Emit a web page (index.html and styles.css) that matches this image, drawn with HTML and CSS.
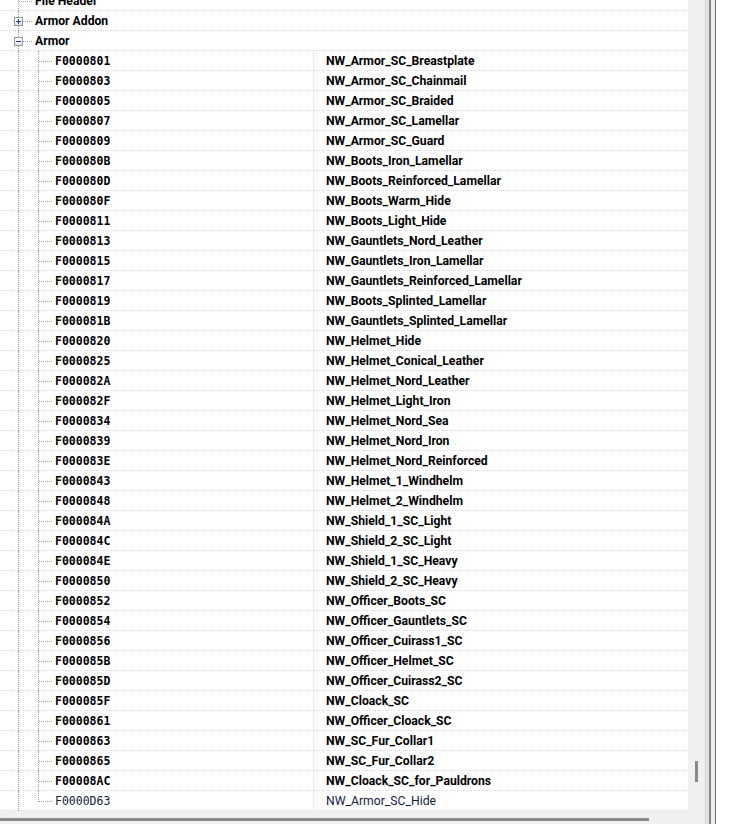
FILE: index.html
```html
<!DOCTYPE html>
<html lang="en">
<head>
  <meta charset="UTF-8" />
  <title>Records</title>
  <link rel="stylesheet" href="styles.css">
</head>
<body>
  <div class="window">
    <div class="tree-panel">
      <div class="tree">
        <div class="rows">
          <!-- group nodes -->
          <div class="row group">
            <span class="guide"></span>
            <span class="label">File Header</span>
          </div>
          <div class="row group">
            <span class="guide"><i class="toggle plus"></i></span>
            <span class="label">Armor Addon</span>
          </div>
          <div class="row group">
            <span class="guide"><i class="toggle"></i></span>
            <span class="label">Armor</span>
          </div>

          <!-- armor records -->
          <div class="row"><div class="col-id"><span class="guide"></span><span class="guide branch"></span><span class="id">F0000801</span></div><div class="col-name">NW_Armor_SC_Breastplate</div></div>
          <div class="row"><div class="col-id"><span class="guide"></span><span class="guide branch"></span><span class="id">F0000803</span></div><div class="col-name">NW_Armor_SC_Chainmail</div></div>
          <div class="row"><div class="col-id"><span class="guide"></span><span class="guide branch"></span><span class="id">F0000805</span></div><div class="col-name">NW_Armor_SC_Braided</div></div>
          <div class="row"><div class="col-id"><span class="guide"></span><span class="guide branch"></span><span class="id">F0000807</span></div><div class="col-name">NW_Armor_SC_Lamellar</div></div>
          <div class="row"><div class="col-id"><span class="guide"></span><span class="guide branch"></span><span class="id">F0000809</span></div><div class="col-name">NW_Armor_SC_Guard</div></div>
          <div class="row"><div class="col-id"><span class="guide"></span><span class="guide branch"></span><span class="id">F000080B</span></div><div class="col-name">NW_Boots_Iron_Lamellar</div></div>
          <div class="row"><div class="col-id"><span class="guide"></span><span class="guide branch"></span><span class="id">F000080D</span></div><div class="col-name">NW_Boots_Reinforced_Lamellar</div></div>
          <div class="row"><div class="col-id"><span class="guide"></span><span class="guide branch"></span><span class="id">F000080F</span></div><div class="col-name">NW_Boots_Warm_Hide</div></div>
          <div class="row"><div class="col-id"><span class="guide"></span><span class="guide branch"></span><span class="id">F0000811</span></div><div class="col-name">NW_Boots_Light_Hide</div></div>
          <div class="row"><div class="col-id"><span class="guide"></span><span class="guide branch"></span><span class="id">F0000813</span></div><div class="col-name">NW_Gauntlets_Nord_Leather</div></div>
          <div class="row"><div class="col-id"><span class="guide"></span><span class="guide branch"></span><span class="id">F0000815</span></div><div class="col-name">NW_Gauntlets_Iron_Lamellar</div></div>
          <div class="row"><div class="col-id"><span class="guide"></span><span class="guide branch"></span><span class="id">F0000817</span></div><div class="col-name">NW_Gauntlets_Reinforced_Lamellar</div></div>
          <div class="row"><div class="col-id"><span class="guide"></span><span class="guide branch"></span><span class="id">F0000819</span></div><div class="col-name">NW_Boots_Splinted_Lamellar</div></div>
          <div class="row"><div class="col-id"><span class="guide"></span><span class="guide branch"></span><span class="id">F000081B</span></div><div class="col-name">NW_Gauntlets_Splinted_Lamellar</div></div>
          <div class="row"><div class="col-id"><span class="guide"></span><span class="guide branch"></span><span class="id">F0000820</span></div><div class="col-name">NW_Helmet_Hide</div></div>
          <div class="row"><div class="col-id"><span class="guide"></span><span class="guide branch"></span><span class="id">F0000825</span></div><div class="col-name">NW_Helmet_Conical_Leather</div></div>
          <div class="row"><div class="col-id"><span class="guide"></span><span class="guide branch"></span><span class="id">F000082A</span></div><div class="col-name">NW_Helmet_Nord_Leather</div></div>
          <div class="row"><div class="col-id"><span class="guide"></span><span class="guide branch"></span><span class="id">F000082F</span></div><div class="col-name">NW_Helmet_Light_Iron</div></div>
          <div class="row"><div class="col-id"><span class="guide"></span><span class="guide branch"></span><span class="id">F0000834</span></div><div class="col-name">NW_Helmet_Nord_Sea</div></div>
          <div class="row"><div class="col-id"><span class="guide"></span><span class="guide branch"></span><span class="id">F0000839</span></div><div class="col-name">NW_Helmet_Nord_Iron</div></div>
          <div class="row"><div class="col-id"><span class="guide"></span><span class="guide branch"></span><span class="id">F000083E</span></div><div class="col-name">NW_Helmet_Nord_Reinforced</div></div>
          <div class="row"><div class="col-id"><span class="guide"></span><span class="guide branch"></span><span class="id">F0000843</span></div><div class="col-name">NW_Helmet_1_Windhelm</div></div>
          <div class="row"><div class="col-id"><span class="guide"></span><span class="guide branch"></span><span class="id">F0000848</span></div><div class="col-name">NW_Helmet_2_Windhelm</div></div>
          <div class="row"><div class="col-id"><span class="guide"></span><span class="guide branch"></span><span class="id">F000084A</span></div><div class="col-name">NW_Shield_1_SC_Light</div></div>
          <div class="row"><div class="col-id"><span class="guide"></span><span class="guide branch"></span><span class="id">F000084C</span></div><div class="col-name">NW_Shield_2_SC_Light</div></div>
          <div class="row"><div class="col-id"><span class="guide"></span><span class="guide branch"></span><span class="id">F000084E</span></div><div class="col-name">NW_Shield_1_SC_Heavy</div></div>
          <div class="row"><div class="col-id"><span class="guide"></span><span class="guide branch"></span><span class="id">F0000850</span></div><div class="col-name">NW_Shield_2_SC_Heavy</div></div>
          <div class="row"><div class="col-id"><span class="guide"></span><span class="guide branch"></span><span class="id">F0000852</span></div><div class="col-name">NW_Officer_Boots_SC</div></div>
          <div class="row"><div class="col-id"><span class="guide"></span><span class="guide branch"></span><span class="id">F0000854</span></div><div class="col-name">NW_Officer_Gauntlets_SC</div></div>
          <div class="row"><div class="col-id"><span class="guide"></span><span class="guide branch"></span><span class="id">F0000856</span></div><div class="col-name">NW_Officer_Cuirass1_SC</div></div>
          <div class="row"><div class="col-id"><span class="guide"></span><span class="guide branch"></span><span class="id">F000085B</span></div><div class="col-name">NW_Officer_Helmet_SC</div></div>
          <div class="row"><div class="col-id"><span class="guide"></span><span class="guide branch"></span><span class="id">F000085D</span></div><div class="col-name">NW_Officer_Cuirass2_SC</div></div>
          <div class="row"><div class="col-id"><span class="guide"></span><span class="guide branch"></span><span class="id">F000085F</span></div><div class="col-name">NW_Cloack_SC</div></div>
          <div class="row"><div class="col-id"><span class="guide"></span><span class="guide branch"></span><span class="id">F0000861</span></div><div class="col-name">NW_Officer_Cloack_SC</div></div>
          <div class="row"><div class="col-id"><span class="guide"></span><span class="guide branch"></span><span class="id">F0000863</span></div><div class="col-name">NW_SC_Fur_Collar1</div></div>
          <div class="row"><div class="col-id"><span class="guide"></span><span class="guide branch"></span><span class="id">F0000865</span></div><div class="col-name">NW_SC_Fur_Collar2</div></div>
          <div class="row"><div class="col-id"><span class="guide"></span><span class="guide branch"></span><span class="id">F00008AC</span></div><div class="col-name">NW_Cloack_SC_for_Pauldrons</div></div>
          <div class="row plain"><div class="col-id"><span class="guide"></span><span class="guide branch last"></span><span class="id">F0000D63</span></div><div class="col-name">NW_Armor_SC_Hide</div></div>
        </div>
      </div>
      <div class="hscroll"><div class="thumb"></div></div>
    </div>
    <div class="vscroll"><div class="thumb"></div></div>
    <div class="splitter"></div>
    <div class="side"></div>
  </div>
</body>
</html>
```

FILE: styles.css
```css
* {
  margin: 0;
  padding: 0;
  box-sizing: border-box;
}

body {
  width: 734px;
  height: 824px;
  overflow: hidden;
  background: #fff;
  font-family: Roboto, "Liberation Sans", sans-serif;
  font-size: 12.2px;
  color: #000;
}

.window {
  display: flex;
  height: 824px;
}

/* Tree list */
.tree-panel {
  width: 688px;
  display: flex;
  flex-direction: column;
}

.tree {
  flex: 1;
  overflow: hidden;
  background: #fff;
}

/* list is scrolled so the first row is half hidden */
.rows {
  margin-top: -9px;
}

.row {
  display: flex;
  height: 20px;
  padding-left: 8px;
  border-bottom: 1px dotted #dcdcdc;
}

.label,
.id,
.col-name {
  padding-top: 1px;
  line-height: 18px;
}

.label,
.col-name {
  font-weight: bold;
}

.label {
  margin-left: 7px;
}

.col-id {
  display: flex;
  width: 305px;
}

.id {
  margin-left: 7px;
  font-family: "DejaVu Sans Mono", "Liberation Mono", monospace;
  font-weight: bold;
  font-size: 11.5px;
}

.col-name {
  flex: 1;
  padding-left: 12px;
  border-left: 1px dotted #dcdcdc;
}

.row.plain .id,
.row.plain .col-name {
  font-weight: normal;
  color: #14203e;
}

/* Tree guide lines */
.guide {
  position: relative;
  width: 20px;
  height: 20px;
  flex-shrink: 0;
}

.guide::before {
  content: "";
  position: absolute;
  left: 10px;
  top: 0;
  height: 20px;
  border-left: 1px dotted #a0a0a0;
}

.group .guide::after,
.guide.branch::after {
  content: "";
  position: absolute;
  left: 11px;
  top: 10px;
  width: 13px;
  border-top: 1px dotted #a0a0a0;
}

.guide.last::before {
  height: 11px;
}

/* expand / collapse box */
.toggle {
  position: absolute;
  left: 6px;
  top: 6px;
  width: 9px;
  height: 9px;
  border: 1px solid #8f97a3;
  background: linear-gradient(#ffffff, #e4e4e4);
  z-index: 1;
}

.toggle::before {
  content: "";
  position: absolute;
  left: 1px;
  top: 3px;
  width: 5px;
  height: 1px;
  background: #1f3f7c;
}

.toggle.plus::after {
  content: "";
  position: absolute;
  left: 3px;
  top: 1px;
  width: 1px;
  height: 5px;
  background: #1f3f7c;
}

/* Scroll bars */
.hscroll {
  height: 13px;
  padding-top: 7px;
  background: #f0f0f0;
}

.hscroll .thumb {
  width: 649px;
  height: 3px;
  background: #8a8a8a;
}

.vscroll {
  width: 17px;
  padding: 761px 0 0 7px;
  background: #f0f0f0;
}

.vscroll .thumb {
  width: 3px;
  height: 21px;
  background: #8a8a8a;
}

/* panel splitter */
.splitter {
  width: 11px;
  background: linear-gradient(to right,
    #cfcfcf 0 1px,
    #e2e2e2 1px 4px,
    #858585 4px 6px,
    #ececec 6px 10px,
    #6c6c6c 10px 11px);
}

.side {
  flex: 1;
  background: #fff;
}
```
